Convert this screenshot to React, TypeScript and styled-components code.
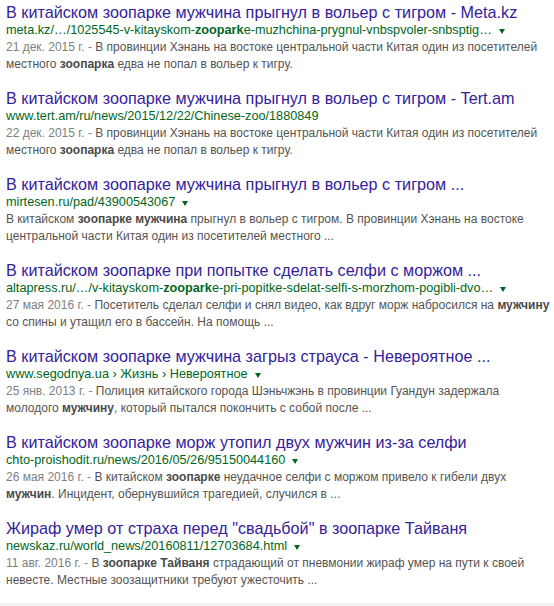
import React from 'react';
import styled, { createGlobalStyle } from 'styled-components';

type Seg = string | { b: string };

type Result = {
  title: string;
  url: Seg[];
  arrow: boolean;
  date?: string;
  lines: Seg[][];
};

const RESULTS: Result[] = [
  {
    title: 'В китайском зоопарке мужчина прыгнул в вольер с тигром - Meta.kz',
    url: ['meta.kz/…/1025545-v-kitayskom-', { b: 'zoopark' }, 'e-muzhchina-prygnul-vnbspvoler-snbsptig…'],
    arrow: true,
    date: '21 дек. 2015 г.',
    lines: [
      ['В провинции Хэнань на востоке центральной части Китая один из посетителей'],
      ['местного ', { b: 'зоопарка' }, ' едва не попал в вольер к тигру.'],
    ],
  },
  {
    title: 'В китайском зоопарке мужчина прыгнул в вольер с тигром - Tert.am',
    url: ['www.tert.am/ru/news/2015/12/22/Chinese-zoo/1880849'],
    arrow: false,
    date: '22 дек. 2015 г.',
    lines: [
      ['В провинции Хэнань на востоке центральной части Китая один из посетителей'],
      ['местного ', { b: 'зоопарка' }, ' едва не попал в вольер к тигру.'],
    ],
  },
  {
    title: 'В китайском зоопарке мужчина прыгнул в вольер с тигром ...',
    url: ['mirtesen.ru/pad/43900543067'],
    arrow: true,
    lines: [
      ['В китайском ', { b: 'зоопарке мужчина' }, ' прыгнул в вольер с тигром. В провинции Хэнань на востоке'],
      ['центральной части Китая один из посетителей местного ...'],
    ],
  },
  {
    title: 'В китайском зоопарке при попытке сделать селфи с моржом ...',
    url: ['altapress.ru/…/v-kitayskom-', { b: 'zoopark' }, 'e-pri-popitke-sdelat-selfi-s-morzhom-pogibli-dvo…'],
    arrow: true,
    date: '27 мая 2016 г.',
    lines: [
      ['Посетитель сделал селфи и снял видео, как вдруг морж набросился на ', { b: 'мужчину' }],
      ['со спины и утащил его в бассейн. На помощь ...'],
    ],
  },
  {
    title: 'В китайском зоопарке мужчина загрыз страуса - Невероятное ...',
    url: ['www.segodnya.ua › Жизнь › Невероятное'],
    arrow: true,
    date: '25 янв. 2013 г.',
    lines: [
      ['Полиция китайского города Шэньчжэнь в провинции Гуандун задержала'],
      ['молодого ', { b: 'мужчину' }, ', который пытался покончить с собой после ...'],
    ],
  },
  {
    title: 'В китайском зоопарке морж утопил двух мужчин из-за селфи',
    url: ['chto-proishodit.ru/news/2016/05/26/95150044160'],
    arrow: true,
    date: '26 мая 2016 г.',
    lines: [
      ['В китайском ', { b: 'зоопарке' }, ' неудачное селфи с моржом привело к гибели двух'],
      [{ b: 'мужчин' }, '. Инцидент, обернувшийся трагедией, случился в ...'],
    ],
  },
  {
    title: 'Жираф умер от страха перед "свадьбой" в зоопарке Тайваня',
    url: ['newskaz.ru/world_news/20160811/12703684.html'],
    arrow: true,
    date: '11 авг. 2016 г.',
    lines: [
      ['В ', { b: 'зоопарке Тайваня' }, ' страдающий от пневмонии жираф умер на пути к своей'],
      ['невесте. Местные зоозащитники требуют ужесточить ...'],
    ],
  },
];

function renderSegs(segs: Seg[], Bold: typeof UrlBold | typeof Em) {
  return segs.map((s, i) => (typeof s === 'string' ? <React.Fragment key={i}>{s}</React.Fragment> : <Bold key={i}>{s.b}</Bold>));
}

export default function App() {
  return (
    <>
      <GlobalStyle />
      <Page>
        <ResultList>
          {RESULTS.map((r, i) => (
            <ResultItem key={i}>
              <Title href="#">{r.title}</Title>
              <UrlRow>
                <Cite>{renderSegs(r.url, UrlBold)}</Cite>
                {r.arrow && <DropArrow />}
              </UrlRow>
              <Snippet>
                {r.lines.map((line, j) => (
                  <SnippetLine key={j}>
                    {j === 0 && r.date && <DateText>{r.date} - </DateText>}
                    {renderSegs(line, Em)}
                  </SnippetLine>
                ))}
              </Snippet>
            </ResultItem>
          ))}
        </ResultList>
        <FooterStrip />
      </Page>
    </>
  );
}

const GlobalStyle = createGlobalStyle`
  html, body {
    margin: 0;
    padding: 0;
    background: #fff;
  }
  body {
    font-family: "Liberation Sans", Arial, sans-serif;
  }
`;

const Page = styled.div`
  width: 554px;
  height: 606px;
  display: flex;
  flex-direction: column;
  overflow: hidden;
`;

const ResultList = styled.div`
  flex: 1;
  display: flex;
  flex-direction: column;
  gap: 16px;
  padding: 3px 0 0 6px;
`;

const ResultItem = styled.div`
  display: flex;
  flex-direction: column;
`;

const Title = styled.a`
  font-size: 16.2px;
  line-height: 19px;
  color: #34229a;
  text-decoration: none;
  white-space: nowrap;
`;

const UrlRow = styled.div`
  display: flex;
  align-items: center;
  height: 17px;
`;

const Cite = styled.cite`
  font-style: normal;
  font-size: 12.7px;
  line-height: 17px;
  color: #006621;
  white-space: nowrap;
`;

const UrlBold = styled.b`
  font-weight: bold;
`;

const DropArrow = styled.span`
  margin: 1px 0 0 7px;
  width: 0;
  height: 0;
  border-left: 3px solid transparent;
  border-right: 3px solid transparent;
  border-top: 5px solid #006621;
`;

const Snippet = styled.div`
  display: flex;
  flex-direction: column;
  font-size: 12px;
  line-height: 17px;
  color: #545454;
`;

const SnippetLine = styled.div`
  white-space: nowrap;
`;

const DateText = styled.span`
  color: #808080;
`;

const Em = styled.b`
  font-weight: bold;
  color: #4a4a4a;
`;

const FooterStrip = styled.div`
  height: 3px;
  background: #f2f2f2;
`;
